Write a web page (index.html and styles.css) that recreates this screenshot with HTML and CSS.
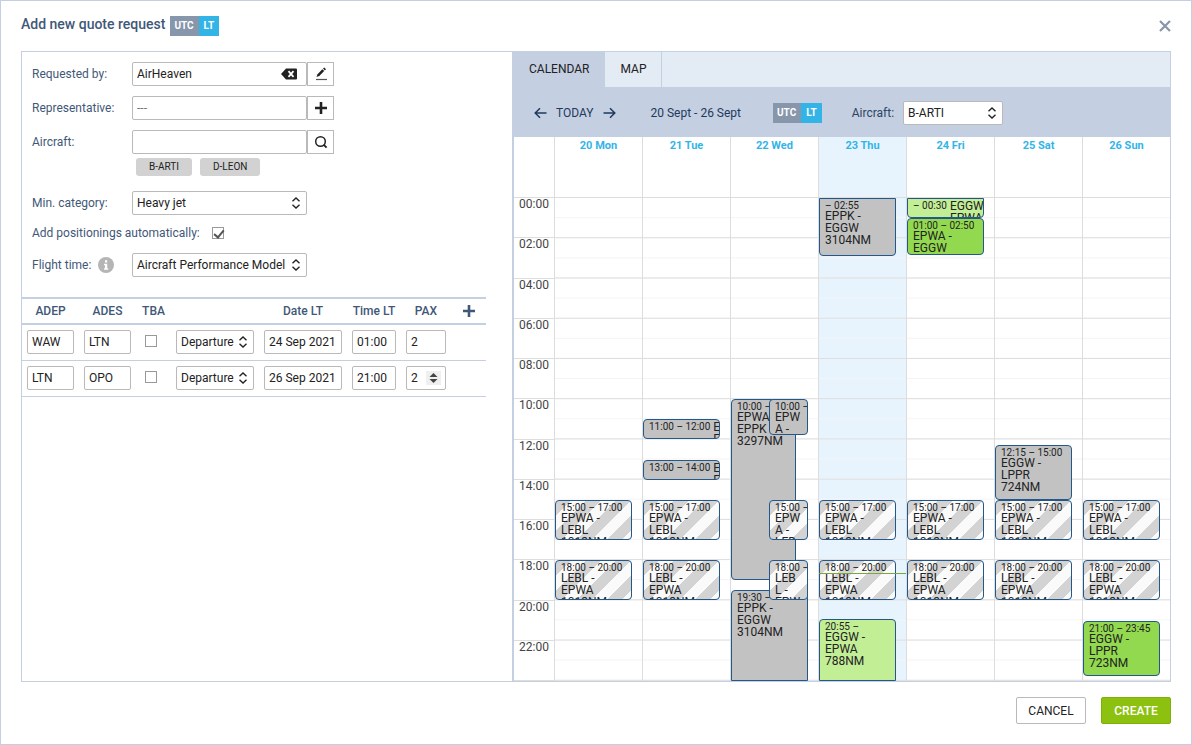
FILE: index.html
```html
<!DOCTYPE html>
<html lang="en">
<head>
    <meta charset="UTF-8">
    <meta name="viewport" content="width=device-width, initial-scale=1.0">
    <title>Add new quote request</title>
    <link rel="stylesheet" href="styles.css">
</head>
<body>
    <svg class="sprite" aria-hidden="true">
        <symbol id="updown" viewBox="0 0 8 12"><path d="M.5 4.200 4 1l3.500 3.200M.5 7.800 4 11l3.500-3.200" fill="none" stroke="currentColor" stroke-width="1.4"/></symbol>
        <symbol id="plus" viewBox="0 0 12 12"><path d="M6 0v12M0 6h12" stroke="currentColor" stroke-width="2.6"/></symbol>
    </svg>
    <div class="dialog">
        <header class="dialog-header">
            <h1>Add new quote request</h1>
            <div class="zone"><button class="utc">UTC</button><button class="lt">LT</button></div>
            <button class="close" aria-label="Close">
                <svg width="12" height="12" viewBox="0 0 12 12"><path d="M1 1l10 10M11 1 1 11" stroke="currentColor" stroke-width="2.2"/></svg>
            </button>
        </header>

        <main class="panes">
            <section class="request">
                <div class="fields">
                    <div class="field">
                        <label for="requestedBy">Requested by:</label>
                        <div class="group">
                            <div class="clearable">
                                <input type="text" id="requestedBy" value="AirHeaven">
                                <button class="clear" aria-label="Clear">
                                    <svg width="16" height="12" viewBox="0 0 16 12"><path d="M5 .5h10q1 0 1 1v9q0 1-1 1H5L0 6z" fill="#222"/><path d="M7.500 3.200l5 5.600M12.500 3.200l-5 5.600" stroke="#fff" stroke-width="1.800"/></svg>
                                </button>
                            </div>
                            <button class="addon" aria-label="Edit">
                                <svg width="12" height="14" viewBox="0 0 12 14"><path d="M1.500 10 2.500 7.200l4.800-4.900 1.900 1.800-4.900 4.900z" fill="#222"/><path d="M8 1.600 9.200.5l1.800 1.800-1.200 1.100z" fill="#222"/><path d="M1 12.500h11" stroke="#555" stroke-width="1.200"/></svg>
                            </button>
                        </div>
                    </div>
                    <div class="field">
                        <label for="representative">Representative:</label>
                        <div class="group">
                            <input type="text" id="representative" placeholder="---">
                            <button class="addon" aria-label="Add representative"><svg width="12" height="12"><use href="#plus"/></svg></button>
                        </div>
                    </div>
                    <div class="field">
                        <label for="aircraft">Aircraft:</label>
                        <div class="group">
                            <input type="text" id="aircraft">
                            <button class="addon" aria-label="Search aircraft">
                                <svg width="14" height="14" viewBox="0 0 14 14" fill="none" stroke="currentColor"><circle cx="6.500" cy="6.500" r="4.800" stroke-width="1.500"/><path d="M9.600 9.600l3 3" stroke-width="1.800"/></svg>
                            </button>
                        </div>
                    </div>
                    <div class="chips">
                        <button>B-ARTI</button>
                        <button>D-LEON</button>
                    </div>
                    <div class="field">
                        <label for="category">Min. category:</label>
                        <div class="select wide">
                            <select id="category"><option>Heavy jet</option></select>
                            <svg width="8" height="12"><use href="#updown"/></svg>
                        </div>
                    </div>
                    <div class="field check-field">
                        <label for="positionings">Add positionings automatically:</label>
                        <input type="checkbox" id="positionings" checked>
                    </div>
                    <div class="field">
                        <div class="label-info">
                            <label for="flightTime">Flight time:</label>
                            <svg width="16" height="16" viewBox="0 0 16 16"><circle cx="8" cy="8" r="8" fill="#b5b5b5"/><path d="M7 3.200h2.200v2.200H7zM6 6.700h3.200v4.500h1V12.700H6v-1.500h1V8.200H6z" fill="#fff"/></svg>
                        </div>
                        <div class="select wide">
                            <select id="flightTime"><option>Aircraft Performance Model</option></select>
                            <svg width="8" height="12"><use href="#updown"/></svg>
                        </div>
                    </div>
                </div>

                <table class="legs">
                    <colgroup>
                        <col class="col-airport"><col class="col-airport"><col class="col-tba"><col class="col-date"><col class="col-date"><col class="col-time"><col class="col-pax"><col>
                    </colgroup>
                    <thead>
                        <tr>
                            <th>ADEP</th>
                            <th>ADES</th>
                            <th>TBA</th>
                            <th></th>
                            <th>Date LT</th>
                            <th>Time LT</th>
                            <th>PAX</th>
                            <th><button class="add-leg" aria-label="Add leg"><svg width="12" height="12"><use href="#plus"/></svg></button></th>
                        </tr>
                    </thead>
                    <tbody>
                        <tr>
                            <td><input type="text" aria-label="ADEP" value="WAW"></td>
                            <td><input type="text" aria-label="ADES" value="LTN"></td>
                            <td><input type="checkbox" aria-label="TBA"></td>
                            <td>
                                <div class="select">
                                    <select aria-label="Time type"><option>Departure</option></select>
                                    <svg width="8" height="12"><use href="#updown"/></svg>
                                </div>
                            </td>
                            <td><input type="text" aria-label="Date LT" value="24 Sep 2021"></td>
                            <td><input type="text" aria-label="Time LT" value="01:00"></td>
                            <td><input type="number" aria-label="PAX" value="2"></td>
                            <td></td>
                        </tr>
                        <tr>
                            <td><input type="text" aria-label="ADEP" value="LTN"></td>
                            <td><input type="text" aria-label="ADES" value="OPO"></td>
                            <td><input type="checkbox" aria-label="TBA"></td>
                            <td>
                                <div class="select">
                                    <select aria-label="Time type"><option>Departure</option></select>
                                    <svg width="8" height="12"><use href="#updown"/></svg>
                                </div>
                            </td>
                            <td><input type="text" aria-label="Date LT" value="26 Sep 2021"></td>
                            <td><input type="text" aria-label="Time LT" value="21:00"></td>
                            <td>
                                <div class="spinner">
                                    <input type="number" aria-label="PAX" value="2">
                                    <svg width="15" height="14" viewBox="0 0 15 14"><path d="M0 0h15v14H0z" fill="#efefef"/><path d="M7.500 2 11.500 6h-8zM7.500 12l4-4h-8z" fill="#444"/></svg>
                                </div>
                            </td>
                            <td></td>
                        </tr>
                    </tbody>
                </table>
            </section>

            <section class="schedule">
                <nav class="tabs">
                    <button class="active">CALENDAR</button>
                    <button>MAP</button>
                </nav>
                <div class="toolbar">
                    <div class="pager">
                        <button aria-label="Previous week"><svg width="13" height="12" viewBox="0 0 13 12" fill="none" stroke="currentColor" stroke-width="1.500"><path d="M12.500 6H1.500M6 1.200 1.200 6 6 10.800"/></svg></button>
                        <button>TODAY</button>
                        <button aria-label="Next week"><svg width="13" height="12" viewBox="0 0 13 12" fill="none" stroke="currentColor" stroke-width="1.500"><path d="M.5 6h11M7 1.200 11.800 6 7 10.800"/></svg></button>
                    </div>
                    <span class="range">20 Sept - 26 Sept</span>
                    <div class="zone"><button class="utc">UTC</button><button class="lt">LT</button></div>
                    <label for="calendarAircraft">Aircraft:</label>
                    <div class="select plane">
                        <select id="calendarAircraft"><option>B-ARTI</option></select>
                        <svg width="8" height="12"><use href="#updown"/></svg>
                    </div>
                </div>
                <div class="days">
                    <span></span>
                    <span>20 Mon</span>
                    <span>21 Tue</span>
                    <span>22 Wed</span>
                    <span class="today">23 Thu</span>
                    <span>24 Fri</span>
                    <span>25 Sat</span>
                    <span>26 Sun</span>
                </div>
                <div class="week">
                    <div class="hours">
                        <span>00:00</span><span>02:00</span><span>04:00</span><span>06:00</span>
                        <span>08:00</span><span>10:00</span><span>12:00</span><span>14:00</span>
                        <span>16:00</span><span>18:00</span><span>20:00</span><span>22:00</span>
                    </div>
                    <div class="day">
                        <div class="event option" style="--from: 15; --to: 17"><time>15:00 – 17:00</time><p>EPWA - LEBL 1013NM</p></div>
                        <div class="event option" style="--from: 18; --to: 20"><time>18:00 – 20:00</time><p>LEBL - EPWA 1013NM</p></div>
                    </div>
                    <div class="day">
                        <div class="event short" style="--from: 11; --to: 12"><time>11:00 – 12:00</time><p>EPWA&nbsp;- EPPK</p></div>
                        <div class="event short" style="--from: 13; --to: 14"><time>13:00 – 14:00</time><p>EPPK&nbsp;- EPWA</p></div>
                        <div class="event option" style="--from: 15; --to: 17"><time>15:00 – 17:00</time><p>EPWA - LEBL 1013NM</p></div>
                        <div class="event option" style="--from: 18; --to: 20"><time>18:00 – 20:00</time><p>LEBL - EPWA 1013NM</p></div>
                    </div>
                    <div class="day">
                        <div class="event under" style="--from: 10; --to: 19"><time>10:00 – 19:00</time><p>EPWA - EPPK 3297NM</p></div>
                        <div class="event until-end" style="--from: 19.5; --to: 24"><time>19:30 –</time><p>EPPK - EGGW 3104NM</p></div>
                        <div class="event half" style="--from: 10; --to: 11.8"><time>10:00 – 11:45</time><p>EPWA - EPPK</p></div>
                        <div class="event option half" style="--from: 15; --to: 17"><time>15:00 – 17:00</time><p>EPWA - LEBL 1013NM</p></div>
                        <div class="event option half" style="--from: 18; --to: 20"><time>18:00 – 20:00</time><p>LEBL - EPWA 1013NM</p></div>
                    </div>
                    <div class="day today">
                        <div class="event from-start" style="--from: 0; --to: 2.9"><time>– 02:55</time><p>EPPK - EGGW 3104NM</p></div>
                        <div class="event option" style="--from: 15; --to: 17"><time>15:00 – 17:00</time><p>EPWA - LEBL 1013NM</p></div>
                        <div class="event option" style="--from: 18; --to: 20"><time>18:00 – 20:00</time><p>LEBL - EPWA 1013NM</p></div>
                        <div class="event quote until-end" style="--from: 20.92; --to: 24"><time>20:55 –</time><p>EGGW - EPWA 788NM</p></div>
                        <div class="now" style="--from: 18.65"></div>
                    </div>
                    <div class="day">
                        <div class="event quote short from-start" style="--from: 0; --to: 1"><time>– 00:30</time><p>EGGW&nbsp;- EPWA</p></div>
                        <div class="event booked" style="--from: 1; --to: 2.83"><time>01:00 – 02:50</time><p>EPWA - EGGW</p></div>
                        <div class="event option" style="--from: 15; --to: 17"><time>15:00 – 17:00</time><p>EPWA - LEBL 1013NM</p></div>
                        <div class="event option" style="--from: 18; --to: 20"><time>18:00 – 20:00</time><p>LEBL - EPWA 1013NM</p></div>
                    </div>
                    <div class="day">
                        <div class="event" style="--from: 12.25; --to: 15"><time>12:15 – 15:00</time><p>EGGW - LPPR 724NM</p></div>
                        <div class="event option" style="--from: 15; --to: 17"><time>15:00 – 17:00</time><p>EPWA - LEBL 1013NM</p></div>
                        <div class="event option" style="--from: 18; --to: 20"><time>18:00 – 20:00</time><p>LEBL - EPWA 1013NM</p></div>
                    </div>
                    <div class="day">
                        <div class="event option" style="--from: 15; --to: 17"><time>15:00 – 17:00</time><p>EPWA - LEBL 1013NM</p></div>
                        <div class="event option" style="--from: 18; --to: 20"><time>18:00 – 20:00</time><p>LEBL - EPWA 1013NM</p></div>
                        <div class="event booked" style="--from: 21; --to: 23.75"><time>21:00 – 23:45</time><p>EGGW - LPPR 723NM</p></div>
                    </div>
                </div>
            </section>
        </main>

        <footer class="dialog-footer">
            <button class="cancel">CANCEL</button>
            <button class="create">CREATE</button>
        </footer>
    </div>
</body>
</html>
```
FILE: styles.css
```css
* {
    box-sizing: border-box;
}
body {
    margin: 0;
    font-family: Roboto, "Liberation Sans", sans-serif;
    font-size: 12px;
    line-height: 16px;
    color: #3f5878;
    background-color: #fff;
}
button,
input,
select {
    font: inherit;
    color: #222;
    margin: 0;
}
button {
    padding: 0;
    border: none;
    background: none;
    cursor: pointer;
}
svg {
    display: block;
    flex: none;
}
.sprite {
    position: absolute;
    width: 0;
    height: 0;
}
.dialog {
    display: flex;
    flex-direction: column;
    min-height: 100vh;
    padding: 0 20px 20px;
    border: 1px solid #c4cfe2;
}

/* header */
.dialog-header {
    display: flex;
    align-items: center;
    gap: 5px;
    height: 50px;
}
h1 {
    margin: 0;
    font-size: 14px;
    font-weight: 500;
    line-height: 20px;
    padding-bottom: 4px;
}
.zone {
    display: flex;
}
.zone button {
    height: 20px;
    padding: 0 5px 0 4px;
    font-size: 10px;
    font-weight: 700;
    color: #fff;
}
.zone .utc {
    background-color: #8796ab;
}
.zone .lt {
    padding-left: 5px;
    background-color: #33b4e7;
}
.close {
    margin-left: auto;
    color: #8796a8;
}

/* request form */
.panes {
    display: grid;
    grid-template-columns: 464px 1fr;
    column-gap: 26px;
    flex: 1;
    border: 1px solid #c4cfe2;
}
.fields {
    display: flex;
    flex-direction: column;
    gap: 10px;
    padding: 10px 10px 20px;
}
.field {
    display: grid;
    grid-template-columns: 100px 202px;
    align-items: center;
}
.check-field {
    grid-template-columns: 180px auto;
    justify-content: start;
    padding-bottom: 2px;
}
.label-info {
    display: flex;
    gap: 7px;
}
.group {
    display: flex;
}
input[type="text"],
input[type="number"],
select {
    width: 100%;
    height: 24px;
    padding: 0 4px;
    border: 1px solid #b9b9b9;
    border-radius: 2px;
    background-color: #fff;
    appearance: none;
}
input[type="number"] {
    appearance: textfield;
}
input::-webkit-inner-spin-button {
    display: none;
}
input::placeholder {
    color: #777;
}
.clearable,
.select,
.spinner {
    display: grid;
    flex: 1;
    align-items: center;
}
.clearable > *,
.select > *,
.spinner > * {
    grid-area: 1 / 1;
}
.clear {
    justify-self: end;
    margin-right: 10px;
}
.addon {
    display: grid;
    place-items: center;
    flex: none;
    width: 27px;
    height: 24px;
    border: 1px solid #b9b9b9;
}
.wide {
    width: 175px;
}
.select svg {
    justify-self: end;
    margin-right: 7px;
    color: #222;
    pointer-events: none;
}
.spinner svg {
    justify-self: end;
    margin-right: 5px;
    pointer-events: none;
}
.chips {
    display: flex;
    gap: 8px;
    padding-left: 104px;
    margin: -6px 0 5px;
}
.chips button {
    height: 18px;
    padding: 0 13px;
    font-size: 10px;
    border-radius: 3px;
    background-color: #d2d2d2;
}
input[type="checkbox"] {
    display: block;
    width: 12px;
    height: 12px;
    border: 1px solid #999;
    background-color: #fff;
    appearance: none;
}
input[type="checkbox"]:checked::before {
    content: "";
    display: block;
    width: 4px;
    height: 8px;
    margin-left: 3px;
    border: solid #555;
    border-width: 0 2px 2px 0;
    transform: rotate(40deg);
}

/* legs table */
.legs {
    width: 100%;
    table-layout: fixed;
    border-collapse: collapse;
}
.col-airport {
    width: 57px;
}
.col-tba {
    width: 35px;
}
.col-date {
    width: 88px;
}
.col-time {
    width: 54px;
}
.col-pax {
    width: 50px;
}
.legs th {
    height: 26px;
    padding: 0;
    font-weight: 500;
    border-top: 2px solid #c4cfe2;
    border-bottom: 2px solid #c4cfe2;
}
.legs td {
    height: 36px;
    padding: 0 5px;
    border-bottom: 1px solid #c4cfe2;
}
.legs td input[type="checkbox"] {
    margin: 0 0 2px 4px;
}
.add-leg {
    display: block;
    margin: 0 auto;
    color: #3f5878;
}

/* calendar */
.schedule {
    display: flex;
    flex-direction: column;
    border-left: 2px solid #c4cfe2;
}
.tabs {
    display: flex;
    background-color: #e3ebf5;
}
.tabs button {
    height: 35px;
    padding: 0 15px 2px;
    border-right: 1px solid #c4cfe2;
}
.tabs .active {
    background-color: #c4cfe2;
}
.toolbar {
    display: flex;
    align-items: center;
    height: 50px;
    padding: 2px 0 0 20px;
    background-color: #c4cfe2;
    color: #2c4563;
}
.toolbar button {
    display: block;
}
.pager {
    display: flex;
    align-items: center;
    gap: 9px;
}
.pager button {
    color: #1f3a5c;
}
.range {
    margin: 0 32px 0 35px;
    color: #1f3a5c;
}
.toolbar label {
    margin: 0 9px 0 30px;
}
.plane {
    flex: none;
    width: 100px;
}
.days,
.week {
    display: grid;
    grid-template-columns: 40px repeat(7, 1fr);
}
.days {
    height: 61px;
    border-bottom: 1px solid #ddd;
    font-size: 11px;
    font-weight: 700;
    line-height: 18px;
    color: #33b4e7;
    text-align: center;
}
.days span + span,
.day {
    border-left: 1px solid #ddd;
}
.today {
    background-color: #e7f4fe;
}
.week {
    flex: 1;
}
.hours {
    display: grid;
    grid-template-rows: repeat(12, 1fr);
    color: #444;
    line-height: 12px;
}
.hours span {
    padding-left: 5px;
    border-bottom: 1px solid #ddd;
}
.day {
    position: relative;
    background-image:
        linear-gradient(to top, #ddd 1px, transparent 1px),
        linear-gradient(to top, #f4f4f4 1px, transparent 1px);
    background-size: 100% calc(100% / 12), 100% calc(100% / 24);
}
.event {
    position: absolute;
    top: calc(var(--from) * 100% / 24);
    left: 0;
    right: 10px;
    height: calc((var(--to) - var(--from)) * 100% / 24);
    padding: 0 5px;
    overflow: hidden;
    border: 1px solid #25588a;
    border-radius: 4px;
    background-color: #c2c2c2;
    color: #222;
    line-height: 12px;
}
.event time {
    display: block;
    height: 11px;
    font-size: 10px;
    line-height: 14px;
    white-space: nowrap;
}
.event p {
    margin: 0;
    overflow-wrap: break-word;
}
.short {
    display: flex;
    gap: 3px;
    padding-right: 0;
}
.short p {
    padding-top: 1px;
}
.under {
    right: 22px;
}
.half {
    left: 38px;
}
.from-start {
    border-top-left-radius: 0;
    border-top-right-radius: 0;
}
.until-end {
    border-bottom-left-radius: 0;
    border-bottom-right-radius: 0;
}
.quote {
    background-color: #c2ee96;
}
.booked {
    background-color: #92d94f;
}
.option {
    background-image: linear-gradient(135deg, #d3d3d3 25%, #fafafa 25%, #fafafa 50%, #d3d3d3 50%, #d3d3d3 75%, #fafafa 75%);
    background-size: 30px 30px;
}
.now {
    position: absolute;
    top: calc(var(--from) * 100% / 24);
    left: 0;
    right: 0;
    border-top: 1px solid #7aa83c;
}

/* footer */
.dialog-footer {
    display: flex;
    justify-content: flex-end;
    gap: 15px;
    padding-top: 15px;
}
.dialog-footer button {
    width: 70px;
    height: 27px;
    border: 1px solid #b9b9b9;
    border-radius: 2px;
}
.dialog-footer .create {
    border-color: #7fb00a;
    background-color: #8cc20f;
    color: #fff;
    font-weight: 500;
}
```
